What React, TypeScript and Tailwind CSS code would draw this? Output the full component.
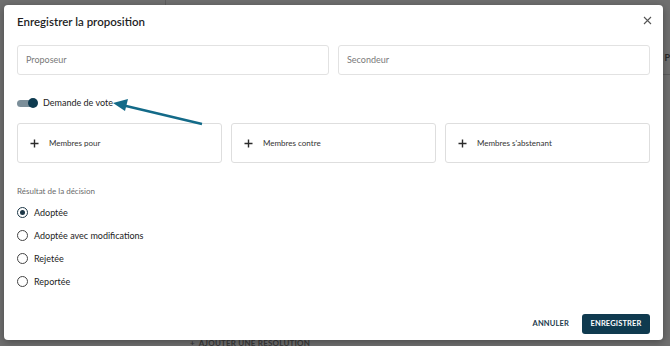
import { useState } from 'react'

const font = { fontFamily: 'Lato, "Liberation Sans", sans-serif' }

function PlusIcon() {
    return (
        <svg width="9" height="9" viewBox="0 0 9 9" className="shrink-0">
            <path d="M4.5 0.5v8M0.5 4.5h8" stroke="#2b2b2b" strokeWidth="1.4" />
        </svg>
    )
}

function App() {
    const [result, setResult] = useState('Adoptée')
    const [vote, setVote] = useState(true)

    const options = ['Adoptée', 'Adoptée avec modifications', 'Rejetée', 'Reportée']
    const members = ['Membres pour', 'Membres contre', "Membres s'abstenant"]

    return (
        <div className="relative w-[670px] h-[346px] overflow-hidden bg-[#707070] pt-[5px] pl-[4px]" style={font}>
            {/* page behind the overlay */}
            <div className="absolute left-[165px] top-0 w-px h-[5px] bg-[#5f5f5f]" />
            <div className="absolute right-0 top-[51px] text-[9px] font-bold text-[#2a2a2a]">P</div>
            <div className="absolute right-0 top-[74px] w-[7px] h-px bg-[#5d5d5d]" />
            <div className="absolute left-[190px] top-[337px] text-[8px] font-bold tracking-wide text-[#3a3a3a]">+&nbsp;&nbsp;AJOUTER UNE RÉSOLUTION</div>

            <div className="relative w-[659px] h-[335px] bg-white rounded-[4px] shadow-[0_2px_8px_rgba(0,0,0,0.35)] flex flex-col px-[13px] pt-[7px] pb-[6px]">
                <div className="flex items-center justify-between h-[20px]">
                    <h2 className="text-[11.5px] font-semibold text-[#1f1f1f]">Enregistrer la proposition</h2>
                    <button className="mr-[-2px] mt-[-4px]">
                        <svg width="9" height="9" viewBox="0 0 9 9">
                            <path d="M1 1l7 7M8 1l-7 7" stroke="#555" strokeWidth="1.1" />
                        </svg>
                    </button>
                </div>

                <div className="grid grid-cols-2 gap-[9px] mt-[13px]">
                    <div className="h-[30px] border border-[#e2e2e2] rounded-[3px] flex items-center px-[8px] text-[9px] text-[#7a7a7a]">Proposeur</div>
                    <div className="h-[30px] border border-[#e2e2e2] rounded-[3px] flex items-center px-[8px] text-[9px] text-[#7a7a7a]">Secondeur</div>
                </div>

                <div className="flex items-center gap-[5px] mt-[21px] h-[14px]">
                    <button onClick={() => setVote(!vote)} className="relative w-[21px] h-[10px] flex items-center">
                        <span className="block w-[20px] h-[7px] rounded-full bg-[#7b8e99]" />
                        <span className={`absolute top-0 w-[10px] h-[10px] rounded-full bg-[#0e3b50] ${vote ? 'left-[11px]' : 'left-0'}`} />
                    </button>
                    <span className="text-[9px] text-[#222]">Demande de vote</span>
                </div>

                <div className="grid grid-cols-3 gap-[9px] mt-[13px]">
                    {members.map(m => (
                        <div key={m} className="h-[40px] border border-[#dedede] rounded-[3px] flex items-center gap-[10px] pl-[12px] text-[8px] text-[#333]">
                            <PlusIcon />
                            <span>{m}</span>
                        </div>
                    ))}
                </div>

                <div className="mt-[21px] text-[8px] text-[#6a6a6a] h-[14px] flex items-center">Résultat de la décision</div>

                <div className="flex flex-col mt-[3px]">
                    {options.map(o => (
                        <label key={o} onClick={() => setResult(o)} className="flex items-center gap-[6px] h-[23px] cursor-pointer">
                            <span className={`w-[11px] h-[11px] rounded-full border-[1.5px] flex items-center justify-center ${result === o ? 'border-[#1d3747]' : 'border-[#444]'}`}>
                                {result === o && <span className="w-[5px] h-[5px] rounded-full bg-[#1d3747]" />}
                            </span>
                            <span className="text-[9px] text-[#222]">{o}</span>
                        </label>
                    ))}
                </div>

                <div className="mt-auto flex justify-end items-center gap-[13px]">
                    <button className="text-[7.5px] font-bold tracking-[0.02em] text-[#1c3a4c]">ANNULER</button>
                    <button className="w-[68px] h-[20px] rounded-[3px] bg-[#0f3a4f] text-white text-[7.5px] font-bold tracking-[0.02em]">ENREGISTRER</button>
                </div>

                {/* annotation arrow */}
                <svg className="absolute left-0 top-0 pointer-events-none" width="659" height="335">
                    <line x1="198" y1="119" x2="120" y2="100.5" stroke="#136a88" strokeWidth="2.4" />
                    <polygon points="109,98 124,94 121,106" fill="#136a88" />
                </svg>
            </div>
        </div>
    )
}

export default App
